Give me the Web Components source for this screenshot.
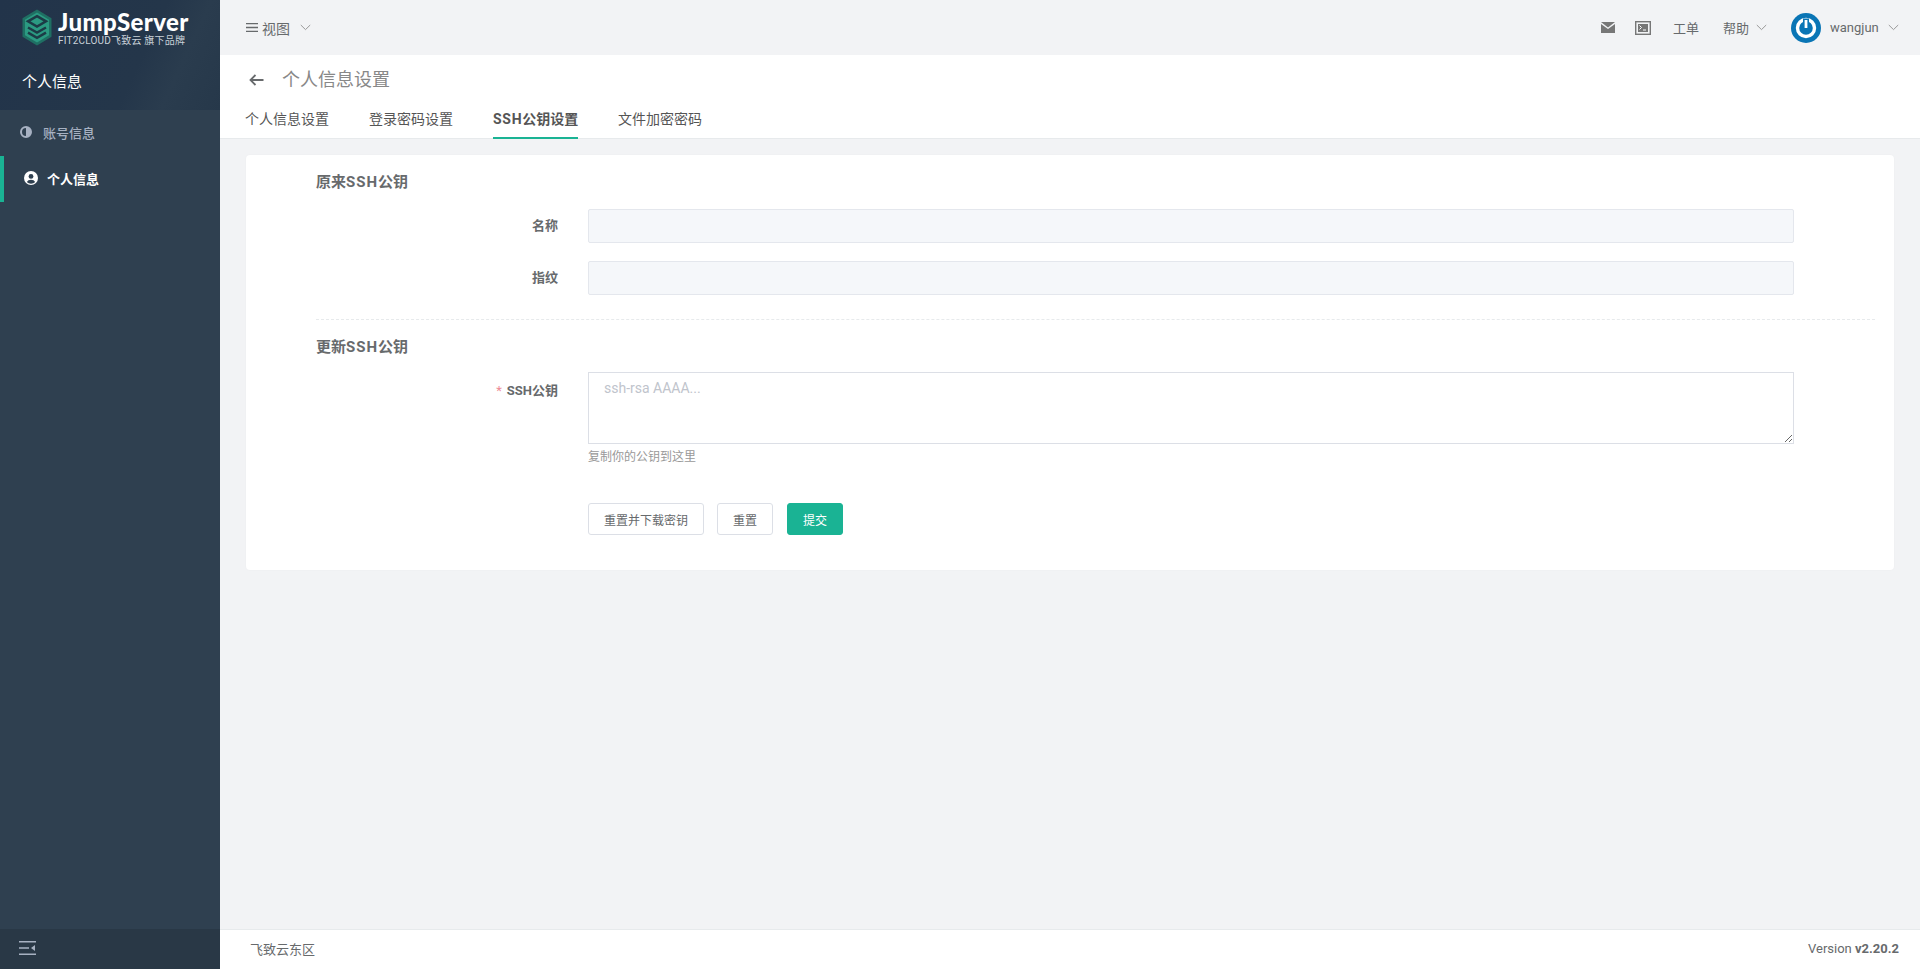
<!DOCTYPE html>
<html lang="zh">
<head>
<meta charset="utf-8">
<title>个人信息设置</title>
<style>
    html, body { margin: 0; height: 100%; }
    body {
        font-family: Roboto, "Noto Sans CJK SC", sans-serif;
        font-size: 13px;
        color: #676a6c;
        background: #f2f3f5;
    }
</style>
</head>
<body>
<js-app>
    <js-sidebar slot="side"></js-sidebar>
    <js-topbar slot="main"></js-topbar>
    <js-pagehead slot="main" title-text="个人信息设置"></js-pagehead>
    <js-card slot="main">
        <js-section-title>原来<span style="letter-spacing:1px">SSH</span>公钥</js-section-title>
        <js-field label="名称"><js-readonly></js-readonly></js-field>
        <js-field label="指纹"><js-readonly></js-readonly></js-field>
        <js-divider></js-divider>
        <js-section-title tight>更新<span style="letter-spacing:1px">SSH</span>公钥</js-section-title>
        <js-field label="SSH公钥" required help="复制你的公钥到这里" top><js-textarea placeholder="ssh-rsa AAAA..."></js-textarea></js-field>
        <js-actions></js-actions>
    </js-card>
    <js-footer slot="main"></js-footer>
</js-app>

<script>
const chevron = `<svg width="11" height="7" viewBox="0 0 11 7" fill="none" stroke="currentColor" stroke-width="1"><path d="M.8 1l4.7 4.6L10.2 1"/></svg>`;

class JsApp extends HTMLElement {
    connectedCallback() {
        this.attachShadow({ mode: 'open' });
        this.shadowRoot.innerHTML = `
            <style>
                :host { display: flex; height: 969px; overflow: hidden; }
                .side { width: 220px; flex: none; display: flex; }
                .main { flex: 1; min-width: 0; display: flex; flex-direction: column; }
            </style>
            <div class="side"><slot name="side"></slot></div>
            <div class="main"><slot name="main"></slot></div>
        `;
    }
}

class JsSidebar extends HTMLElement {
    connectedCallback() {
        this.attachShadow({ mode: 'open' });
        this.shadowRoot.innerHTML = `
            <style>
                :host { display: flex; flex-direction: column; flex: 1; background: #2f4050; }
                .head {
                    height: 110px;
                    box-sizing: border-box;
                    padding: 9px 0 0 22px;
                    background: linear-gradient(115deg, #22344a 0, #24364a 62%, #2a3c4e 78%, #26384a 100%);
                }
                .brand { display: flex; align-items: flex-start; gap: 6px; height: 46px; }
                .brand svg { flex: none; }
                .names { display: flex; flex-direction: column; }
                .logo {
                    font-family: "Lato", "Noto Sans CJK SC", sans-serif;
                    font-weight: 900;
                    font-size: 24px;
                    line-height: 25px;
                    color: #fff;
                    letter-spacing: .4px;
                }
                .sub {
                    font-size: 10px;
                    line-height: 13px;
                    color: #c9d2d9;
                    white-space: nowrap;
                    letter-spacing: .2px;
                }
                .title { color: #fff; font-size: 15px; line-height: 20px; margin-top: 17px; }
                nav { flex: 1; }
                .item {
                    height: 46px;
                    display: flex;
                    align-items: center;
                    color: #a7b1c2;
                    font-weight: 500;
                    font-size: 13px;
                    padding: 0 0 2px 20px;
                    box-sizing: border-box;
                    gap: 11px;
                }
                .item.on {
                    color: #fff;
                    box-shadow: inset 4px 0 0 #1ab394;
                    padding-left: 24px;
                    gap: 9px;
                    font-weight: 700;
                }
                .foot {
                    height: 40px;
                    box-sizing: border-box;
                    padding: 0 0 2px 19px;
                    background: #293846;
                    display: flex;
                    align-items: center;
                }
            </style>
            <div class="head">
                <div class="brand">
                    <svg width="30" height="37" viewBox="0 0 30 36" preserveAspectRatio="none">
                        <path d="M15 .5L29.5 9v18L15 35.5.5 27V9z" fill="#1f6f63"/>
                        <path d="M15 3.5L27 10.5v15L15 32.500 3 25.500v-15z" fill="#2b9a82"/>
                        <path d="M15 7l9 5-9 5-9-5zM6 18l9 5 9-5M6 23l9 5 9-5" fill="none" stroke="#1c3b46" stroke-width="2.400"/>
                    </svg>
                    <div class="names">
                        <span class="logo">JumpServer</span>
                        <span class="sub">FIT2CLOUD飞致云 旗下品牌</span>
                    </div>
                </div>
                <div class="title">个人信息</div>
            </div>
            <nav>
                <div class="item">
                    <svg width="12" height="12" viewBox="0 0 12 12"><circle cx="6" cy="6" r="5" fill="none" stroke="#a7b1c2" stroke-width="2"/><path d="M6 1a5 5 0 0 1 0 10z" fill="#a7b1c2"/></svg>
                    <span>账号信息</span>
                </div>
                <div class="item on">
                    <svg width="14" height="14" viewBox="0 0 14 14"><circle cx="7" cy="7" r="7" fill="#fff"/><circle cx="7" cy="5.400" r="2.400" fill="#2f4050"/><path d="M2.800 11a4.600 3.600 0 0 1 8.400 0A5.800 5.800 0 0 1 2.800 11z" fill="#2f4050"/></svg>
                    <span>个人信息</span>
                </div>
            </nav>
            <div class="foot">
                <svg width="17" height="14" viewBox="0 0 17 14" fill="#a7b1c2"><path d="M0 0h17v1.500H0zM0 6.200h10v1.500H0zM0 12.500h17V14H0z"/><path d="M16 4v6l-4-3z"/></svg>
            </div>
        `;
    }
}

class JsTopbar extends HTMLElement {
    connectedCallback() {
        this.attachShadow({ mode: 'open' });
        this.shadowRoot.innerHTML = `
            <style>
                :host {
                    display: flex;
                    flex: none;
                    height: 55px;
                    align-items: center;
                    justify-content: space-between;
                    background: #f2f3f5;
                    color: #676a6c;
                    padding: 0 21px 0 26px;
                }
                .group { display: flex; align-items: center; }
                .view { font-size: 14px; gap: 4px; }
                .view .chev { margin-left: 6px; }
                .chev { color: #999; display: flex; }
                .mail { margin-right: 20px; display: flex; }
                .term { margin-right: 22px; display: flex; }
                .ticket { margin-right: 24px; }
                .help { margin-right: 24px; gap: 7px; }
                .user { gap: 9px; }
                .wang { width: 49px; }
                .avatar { display: flex; }
            </style>
            <div class="group view">
                <svg width="12" height="11" viewBox="0 0 13 11" fill="#676a6c"><path d="M0 .5h13V2H0zM0 4.700h13v1.500H0zM0 9h13v1.500H0z"/></svg>
                <span>视图</span>
                <span class="chev">${chevron}</span>
            </div>
            <div class="group">
                <span class="mail"><svg width="14" height="11" viewBox="0 0 14 11"><path d="M0 0h14L7 5.500z M0 2l7 5 7-5v9H0z" fill="#777"/></svg></span>
                <span class="term"><svg width="16" height="14" viewBox="0 0 16 14"><rect x=".7" y=".7" width="14.600" height="12.600" fill="none" stroke="#777" stroke-width="1.400"/><rect x="3" y="3" width="10" height="8" fill="#777"/><path d="M4.500 4.500l2 2-2 2M8 9h3" fill="none" stroke="#fff"/></svg></span>
                <span class="ticket">工单</span>
                <span class="group help"><span>帮助</span><span class="chev">${chevron}</span></span>
                <span class="group user">
                    <span class="avatar"><svg width="30" height="30" viewBox="0 0 30 30"><circle cx="15" cy="15" r="15" fill="#0a75b5"/><circle cx="15" cy="15" r="8.500" fill="none" stroke="#fff" stroke-width="3.400"/><path d="M15 5.500v10" stroke="#0a75b5" stroke-width="6"/><path d="M15 7v8" stroke="#fff" stroke-width="2.800"/></svg></span>
                    <span class="wang">wangjun</span>
                    <span class="chev">${chevron}</span>
                </span>
            </div>
        `;
    }
}

class JsPagehead extends HTMLElement {
    connectedCallback() {
        const title = this.getAttribute('title-text');
        const tabs = ['个人信息设置', '登录密码设置', '<span class="lat">SSH</span>公钥设置', '文件加密密码'];
        this.attachShadow({ mode: 'open' });
        this.shadowRoot.innerHTML = `
            <style>
                :host {
                    display: block;
                    flex: none;
                    height: 84px;
                    box-sizing: border-box;
                    background: #fff;
                    border-bottom: 1px solid #e7eaec;
                    padding: 0 25px;
                }
                .top { display: flex; align-items: center; height: 50px; gap: 18px; padding-left: 4px; }
                h1 { margin: 0; font-size: 18px; font-weight: 400; color: #888; line-height: 24px; }
                .tabs { display: flex; gap: 40px; }
                .tab { height: 33px; line-height: 29px; font-size: 14px; color: #555; box-sizing: border-box; }
                .tab.on { font-weight: 700; border-bottom: 2px solid #1ab394; height: 34px; width: 85px; white-space: nowrap; }
                .lat { letter-spacing: .7px; }
            </style>
            <div class="top">
                <svg width="15" height="12" viewBox="0 0 15 12" fill="none" stroke="#676a6c" stroke-width="1.800"><path d="M14.500 6H1.500M6.500 1l-5 5 5 5"/></svg>
                <h1>${title}</h1>
            </div>
            <div class="tabs">
                ${tabs.map((t, i) => `<div class="tab${i === 2 ? ' on' : ''}">${t}</div>`).join('')}
            </div>
        `;
    }
}

class JsCard extends HTMLElement {
    connectedCallback() {
        this.attachShadow({ mode: 'open' });
        this.shadowRoot.innerHTML = `
            <style>
                :host {
                    display: flex;
                    flex-direction: column;
                    flex: none;
                    box-sizing: border-box;
                    width: 1648px;
                    height: 415px;
                    margin: 16px 0 0 26px;
                    padding: 17px 19px 0 70px;
                    background: #fff;
                    border-radius: 4px;
                    box-shadow: 0 0 2px rgba(0,0,0,.04);
                }
            </style>
            <slot></slot>
        `;
    }
}

class JsSectionTitle extends HTMLElement {
    connectedCallback() {
        this.attachShadow({ mode: 'open' });
        this.shadowRoot.innerHTML = `
            <style>
                :host {
                    display: block;
                    font-size: 15px;
                    font-weight: 700;
                    line-height: 20px;
                    color: #676a6c;
                    margin-bottom: 17px;
                }
                :host([tight]) { margin-bottom: 15px; }
            </style>
            <slot></slot>
        `;
    }
}

class JsField extends HTMLElement {
    connectedCallback() {
        const req = this.hasAttribute('required');
        const help = this.getAttribute('help');
        this.attachShadow({ mode: 'open' });
        this.shadowRoot.innerHTML = `
            <style>
                :host { display: flex; align-items: flex-start; margin-bottom: 18px; }
                :host([top]) label { padding-top: 2px; }
                label {
                    width: 242px;
                    flex: none;
                    text-align: right;
                    font-weight: 700;
                    font-size: 13px;
                    line-height: 34px;
                    color: #676a6c;
                }
                label i { color: #ed8a96; font-style: normal; font-weight: 400; margin-right: 5px; }
                .control { margin-left: 30px; width: 1206px; }
                .help { font-size: 12px; line-height: 16px; color: #999; margin-top: 5px; }
            </style>
            <label>${req ? '<i>*</i>' : ''}${this.getAttribute('label')}</label>
            <div class="control">
                <slot></slot>
                ${help ? `<div class="help">${help}</div>` : ''}
            </div>
        `;
    }
}

class JsReadonly extends HTMLElement {
    connectedCallback() {
        this.attachShadow({ mode: 'open' });
        this.shadowRoot.innerHTML = `
            <style>
                :host {
                    display: block;
                    height: 34px;
                    box-sizing: border-box;
                    background: #f5f7fa;
                    border: 1px solid #e4e7ed;
                    border-radius: 2px;
                }
            </style>
        `;
    }
}

class JsTextarea extends HTMLElement {
    connectedCallback() {
        this.attachShadow({ mode: 'open' });
        this.shadowRoot.innerHTML = `
            <style>
                :host { display: block; }
                textarea {
                    display: block;
                    width: 100%;
                    height: 72px;
                    box-sizing: border-box;
                    border: 1px solid #dcdfe6;
                    border-radius: 0;
                    padding: 5px 15px;
                    outline: none;
                    font: 14px/21px Roboto, "Noto Sans CJK SC", sans-serif;
                    color: #606266;
                }
                textarea::placeholder { color: #c0c4cc; opacity: 1; }
            </style>
            <textarea placeholder="${this.getAttribute('placeholder')}"></textarea>
        `;
    }
}

class JsDivider extends HTMLElement {
    connectedCallback() {
        this.attachShadow({ mode: 'open' });
        this.shadowRoot.innerHTML = `
            <style>
                :host { display: block; border-top: 1px dashed #e7eaec; margin: 6px 0 17px; }
            </style>
        `;
    }
}

class JsActions extends HTMLElement {
    connectedCallback() {
        this.attachShadow({ mode: 'open' });
        this.shadowRoot.innerHTML = `
            <style>
                :host { display: flex; gap: 13px; margin: 20px 0 0 272px; }
                button {
                    height: 32px;
                    box-sizing: border-box;
                    padding: 0 15px;
                    background: #fff;
                    border: 1px solid #dcdfe6;
                    border-radius: 3px;
                    color: #676a6c;
                    font: 12px Roboto, "Noto Sans CJK SC", sans-serif;
                }
                button.primary { background: #1ab394; border-color: #1ab394; color: #fff; margin-left: 1px; }
            </style>
            <button>重置并下载密钥</button>
            <button>重置</button>
            <button class="primary">提交</button>
        `;
    }
}

class JsFooter extends HTMLElement {
    connectedCallback() {
        this.attachShadow({ mode: 'open' });
        this.shadowRoot.innerHTML = `
            <style>
                :host {
                    display: flex;
                    flex: none;
                    height: 40px;
                    margin-top: auto;
                    box-sizing: border-box;
                    align-items: center;
                    justify-content: space-between;
                    background: #fff;
                    border-top: 1px solid #e7eaec;
                    padding: 0 21px 2px 30px;
                    color: #676a6c;
                }
                b { font-weight: 700; }
            </style>
            <span>飞致云东区</span>
            <span>Version <b>v2.20.2</b></span>
        `;
    }
}

customElements.define('js-app', JsApp);
customElements.define('js-sidebar', JsSidebar);
customElements.define('js-topbar', JsTopbar);
customElements.define('js-pagehead', JsPagehead);
customElements.define('js-card', JsCard);
customElements.define('js-section-title', JsSectionTitle);
customElements.define('js-field', JsField);
customElements.define('js-readonly', JsReadonly);
customElements.define('js-textarea', JsTextarea);
customElements.define('js-divider', JsDivider);
customElements.define('js-actions', JsActions);
customElements.define('js-footer', JsFooter);
</script>
</body>
</html>
